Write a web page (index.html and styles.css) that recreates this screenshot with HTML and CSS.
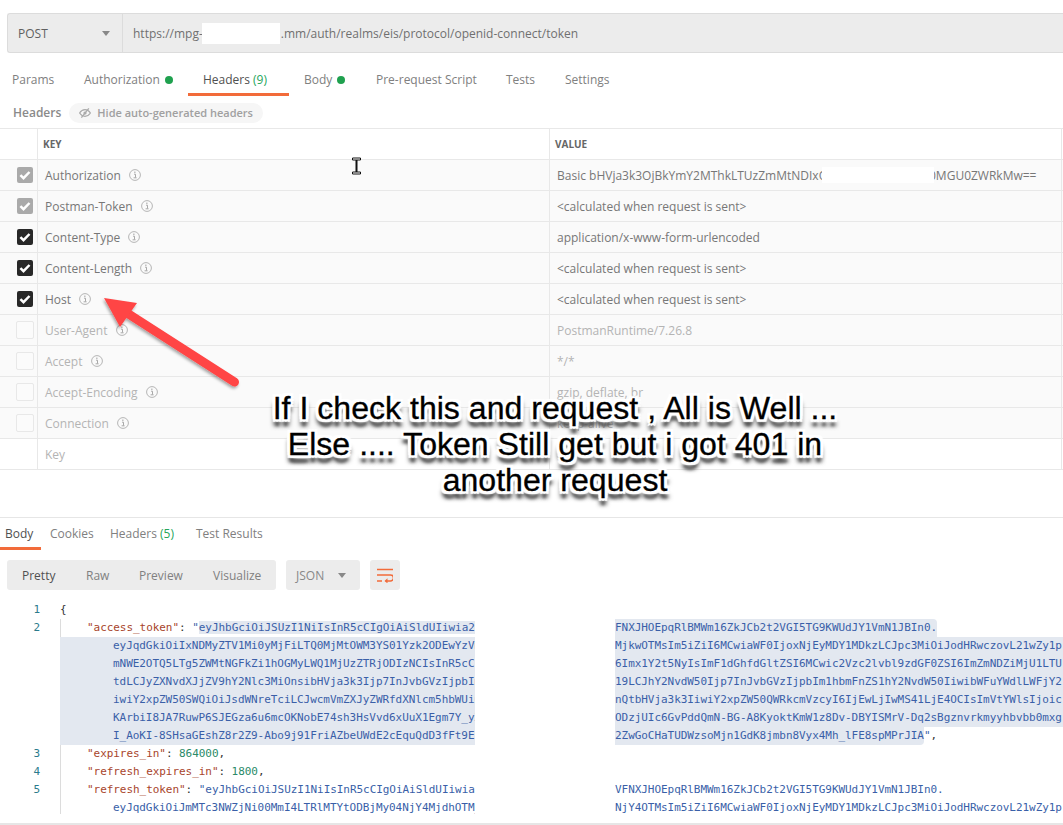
FILE: index.html
```html
<!DOCTYPE html>
<html lang="en">
<head>
<meta charset="utf-8">
<title>Postman request</title>
<link rel="stylesheet" href="styles.css">
</head>
<body>
<svg class="defs" width="0" height="0" aria-hidden="true">
  <symbol id="info" viewBox="0 0 12 12">
    <circle cx="6" cy="6" r="5.4" fill="none" stroke="#b5b5b5" stroke-width="1"/>
    <path d="M5 3.2h1.6M5 5.2h1.5v3.4M4.6 8.8h3" fill="none" stroke="#a8a8a8" stroke-width="1"/>
  </symbol>
  <symbol id="check" viewBox="0 0 16 16">
    <path d="M3.4 8.2l3.1 3 6-6.2" fill="none" stroke="#fff" stroke-width="2.5"/>
  </symbol>
</svg>
<div class="app">
  <div class="urlbar">
    <div class="method"><span>POST</span><i class="caret"></i></div>
    <div class="url"><span>https://mpg-</span><i class="redact-url"></i><span>.mm/auth/realms/eis/protocol/openid-connect/token</span></div>
  </div>

  <nav class="tabs req-tabs">
    <div class="tab t-params">Params</div>
    <div class="tab t-auth">Authorization <i class="dot"></i></div>
    <div class="tab t-head active">Headers <em>(9)</em></div>
    <div class="tab t-body">Body <i class="dot"></i></div>
    <div class="tab t-pre">Pre-request Script</div>
    <div class="tab t-tests">Tests</div>
    <div class="tab t-set">Settings</div>
  </nav>

  <div class="subhead">
    <strong>Headers</strong>
    <div class="pill">
      <svg width="12" height="10" viewBox="0 0 12 10"><path d="M.6 5C2 2.8 3.8 1.7 6 1.7S10 2.8 11.4 5C10 7.2 8.2 8.3 6 8.3S2 7.2.6 5z" fill="none" stroke="#aaa" stroke-width="1.2"/><circle cx="6" cy="5" r="1.6" fill="#aaa"/><path d="M9.8.4L2.4 9.6" stroke="#aaa" stroke-width="1.3"/></svg>
      <span>Hide auto-generated headers</span>
    </div>
  </div>

  <div class="table">
    <div class="row head"><div class="c0"></div><div class="c1">KEY</div><div class="c2">VALUE</div></div>
    <div class="row"><div class="c0"><span class="cb gray"><svg><use href="#check"/></svg></span></div><div class="c1">Authorization <svg class="info"><use href="#info"/></svg></div><div class="c2 auth"><span class="a-left">Basic bHVja3k3OjBkYmY2MThkLTUzZmMtNDIxOTUtYzk2</span><i class="a-gap"></i><span class="a-right">0MGU0ZWRkMw==</span></div></div>
    <div class="row"><div class="c0"><span class="cb gray"><svg><use href="#check"/></svg></span></div><div class="c1">Postman-Token <svg class="info"><use href="#info"/></svg></div><div class="c2">&lt;calculated when request is sent&gt;</div></div>
    <div class="row"><div class="c0"><span class="cb dark"><svg><use href="#check"/></svg></span></div><div class="c1">Content-Type <svg class="info"><use href="#info"/></svg></div><div class="c2">application/x-www-form-urlencoded</div></div>
    <div class="row"><div class="c0"><span class="cb dark"><svg><use href="#check"/></svg></span></div><div class="c1">Content-Length <svg class="info"><use href="#info"/></svg></div><div class="c2">&lt;calculated when request is sent&gt;</div></div>
    <div class="row"><div class="c0"><span class="cb dark"><svg><use href="#check"/></svg></span></div><div class="c1">Host <svg class="info"><use href="#info"/></svg></div><div class="c2">&lt;calculated when request is sent&gt;</div></div>
    <div class="row off"><div class="c0"><span class="cb empty"></span></div><div class="c1">User-Agent <svg class="info"><use href="#info"/></svg></div><div class="c2">PostmanRuntime/7.26.8</div></div>
    <div class="row off"><div class="c0"><span class="cb empty"></span></div><div class="c1">Accept <svg class="info"><use href="#info"/></svg></div><div class="c2">*/*</div></div>
    <div class="row off"><div class="c0"><span class="cb empty"></span></div><div class="c1">Accept-Encoding <svg class="info"><use href="#info"/></svg></div><div class="c2">gzip, deflate, br</div></div>
    <div class="row off"><div class="c0"><span class="cb empty"></span></div><div class="c1">Connection <svg class="info"><use href="#info"/></svg></div><div class="c2">keep-alive</div></div>
    <div class="row blank off"><div class="c0"></div><div class="c1">Key</div><div class="c2"></div></div>
  </div>

  <section class="response">
    <nav class="tabs res-tabs">
      <div class="tab r-body active">Body</div>
      <div class="tab r-cook">Cookies</div>
      <div class="tab r-head">Headers <em>(5)</em></div>
      <div class="tab r-test">Test Results</div>
    </nav>
    <div class="toolbar">
      <div class="seg"><span class="cur">Pretty</span><span>Raw</span><span>Preview</span><span>Visualize</span></div>
      <div class="lang"><span>JSON</span><i class="caret"></i></div>
      <div class="wrapbtn"><svg width="16" height="15" viewBox="0 0 16 15"><path d="M0 1.500h16M0 7h13.500a2.700 2.700 0 0 1 0 6H8.500M0 13h5" fill="none" stroke="#f26b3a" stroke-width="1.6"/><path d="M10.500 10.200L7.500 13l3 2.400z" fill="#f26b3a"/></svg></div>
    </div>
    <div class="code">
      <div class="ln"><span class="n">1</span><span class="l"><b>{</b></span></div>
      <div class="ln"><span class="n">2</span><span class="l g i1"><span class="k">"access_token"</span><b>: </b><span class="s">"</span><span class="s sel">eyJhbGciOiJSUzI1NiIsInR5cCIgOiAiSldUIiwia2</span></span><span class="r"><span class="s sel top">FNXJHOEpqRlBMWm16ZkJCb2t2VGI5TG9KWUdJY1VmN1JBIn0.</span></span></div>
      <div class="ln"><span class="n"></span><span class="l i2 sel s">eyJqdGkiOiIxNDMyZTV1Mi0yMjFiLTQ0MjMtOWM3YS01Yzk2ODEwYzVm</span><span class="r full s">MjkwOTMsIm5iZiI6MCwiaWF0IjoxNjEyMDY1MDkzLCJpc3MiOiJodHRwczovL21wZy1p</span></div>
      <div class="ln"><span class="n"></span><span class="l i2 sel s">mNWE2OTQ5LTg5ZWMtNGFkZi1hOGMyLWQ1MjUzZTRjODIzNCIsInR5cCI</span><span class="r full s">6Imx1Y2t5NyIsImF1dGhfdGltZSI6MCwic2Vzc2lvbl9zdGF0ZSI6ImZmNDZiMjU1LTU</span></div>
      <div class="ln"><span class="n"></span><span class="l i2 sel s">tdLCJyZXNvdXJjZV9hY2Nlc3MiOnsibHVja3k3Ijp7InJvbGVzIjpbIm</span><span class="r full s">19LCJhY2NvdW50Ijp7InJvbGVzIjpbIm1hbmFnZS1hY2NvdW50IiwibWFuYWdlLWFjY2</span></div>
      <div class="ln"><span class="n"></span><span class="l i2 sel s">iwiY2xpZW50SWQiOiJsdWNreTciLCJwcmVmZXJyZWRfdXNlcm5hbWUiO</span><span class="r full s">nQtbHVja3k3IiwiY2xpZW50QWRkcmVzcyI6IjEwLjIwMS41LjE4OCIsImVtYWlsIjoic</span></div>
      <div class="ln"><span class="n"></span><span class="l i2 sel s">KArbiI8JA7RuwP6SJEGza6u6mcOKNobE74sh3HsVvd6xUuX1Egm7Y_yX</span><span class="r full s">ODzjUIc6GvPddQmN-BG-A8KyoktKmW1z8Dv-DBYISMrV-Dq2sBgznvrkmyyhbvbb0mxg</span></div>
      <div class="ln"><span class="n"></span><span class="l i2 sel s">I_AoKI-8SHsaGEshZ8r2Z9-Abo9j91FriAZbeUWdE2cEquQdD3fFt9Ek</span><span class="r"><span class="s sel bot">2ZwGoCHaTUDWzsoMjn1GdK8jmbn8Vyx4Mh_lFE8spMPrJIA</span><span class="s">"</span><b>,</b></span></div>
      <div class="ln"><span class="n">3</span><span class="l g i1"><span class="k">"expires_in"</span><b>: </b><span class="v">864000</span><b>,</b></span></div>
      <div class="ln"><span class="n">4</span><span class="l g i1"><span class="k">"refresh_expires_in"</span><b>: </b><span class="v">1800</span><b>,</b></span></div>
      <div class="ln"><span class="n">5</span><span class="l g i1"><span class="k">"refresh_token"</span><b>: </b><span class="s">"eyJhbGciOiJSUzI1NiIsInR5cCIgOiAiSldUIiwia</span></span><span class="r s">VFNXJHOEpqRlBMWm16ZkJCb2t2VGI5TG9KWUdJY1VmN1JBIn0.</span></div>
      <div class="ln last"><span class="n"></span><span class="l g i2 s">eyJqdGkiOiJmMTc3NWZjNi00MmI4LTRlMTYtODBjMy04NjY4MjdhOTM_</span><span class="r full s">NjY4OTMsIm5iZiI6MCwiaWF0IjoxNjEyMDY1MDkzLCJpc3MiOiJodHRwczovL21wZy1p</span></div>
    </div>
  </section>

  <svg class="ibeam" width="11" height="18" viewBox="0 0 11 18"><path d="M5.500 2v14" stroke="#111" stroke-width="2"/><path d="M1.500 1h8v2h-8zM1.500 15h8v2h-8z" fill="#fff" stroke="#111" stroke-width="1"/></svg>

  <svg class="arrow" width="150" height="100" viewBox="100 295 150 100">
    <defs><filter id="ds" x="-20%" y="-20%" width="140%" height="140%"><feDropShadow dx="-1" dy="2" stdDeviation="1.5" flood-color="#000" flood-opacity=".35"/></filter></defs>
    <g filter="url(#ds)"><path d="M234.500 382L127 313" stroke="#ff4444" stroke-width="9" stroke-linecap="round"/><path d="M104 298l33 5-17 24z" fill="#ff4444"/></g>
  </svg>

  <div class="note">If I check this and request , All is Well ...<br>Else .... Token Still get but i got 401 in<br>another request</div>
</div>
</body>
</html>
```
FILE: styles.css
```css
* { box-sizing: border-box; }
html, body { margin: 0; padding: 0; background: #fff; }
body { width: 1063px; height: 825px; overflow: hidden; font: 12px "Open Sans", sans-serif; color: #6f6f6f; }
.defs { position: absolute; }
.app { position: relative; width: 1063px; height: 825px; padding-top: 13px; overflow: hidden; display: flex; flex-direction: column; }
i, em { font-style: normal; }

.urlbar { margin-left: 7px; height: 40px; display: flex; background: #ececec; border: 1px solid #dcdcdc; border-right: 0; border-radius: 3px 0 0 3px; flex: none; }
.method { width: 115px; display: flex; align-items: center; justify-content: space-between; padding: 0 12px 0 10px; border-right: 1px solid #dcdcdc; color: #606060; }
.caret { display: block; width: 0; height: 0; border: 4px solid transparent; border-top: 5px solid #888; border-bottom: 0; }
.url { display: flex; align-items: center; padding-left: 10px; color: #707070; white-space: pre; }
.redact-url { width: 78px; height: 21px; background: #fff; margin: 0 1px 0 -1px; }

.tabs { display: grid; flex: none; }
.tab { display: flex; align-items: center; white-space: pre; color: #808080; border-bottom: 3px solid transparent; }
.tab em { color: #26a65b; }
.tab.active { color: #505050; border-bottom-color: #f26b3a; }
.dot { display: block; width: 8px; height: 8px; border-radius: 50%; background: #1fa14f; margin-left: 2px; }
.req-tabs { height: 43px; padding: 13px 0 0 12px; grid-template-columns: 72px 104px 101px 87px 130px 59px 1fr; }
.t-head, .t-body { padding-left: 15px; }

.subhead { height: 32px; flex: none; display: flex; align-items: center; padding: 1px 0 0 13px; gap: 8px; }
.subhead strong { font-weight: 600; color: #8a8a8a; }
.pill { height: 20px; width: 194px; display: flex; align-items: center; gap: 6px; padding-left: 10px; background: #f6f6f6; border-radius: 10px; color: #a0a0a0; font-weight: 600; font-size: 11px; white-space: pre; }

.table { flex: none; border-top: 1px solid #e8e8e8; }
.row { display: grid; grid-template-columns: 38px 512px 512px; height: 31px; background: #fafafa; border-bottom: 1px solid #e8e8e8; color: #777; }
.row > div { display: flex; align-items: center; }
.c0 { padding-left: 17px; border-right: 1px solid #e8e8e8; }
.c1 { padding-left: 7px; gap: 5px; white-space: pre; border-right: 1px solid #e8e8e8; }
.c2 { padding-left: 7px; border-right: 1px solid #e8e8e8; white-space: pre; }
.row.head { background: #fff; font-size: 10px; font-weight: 700; color: #666; }
.row.head .c1, .row.head .c2 { padding-left: 5px; }
.row.off { color: #b4b4b4; }
.row.blank { background: #fff; }
.info { width: 12px; height: 12px; flex: none; }
.cb { display: block; width: 16px; height: 16px; border-radius: 2px; }
.cb svg { display: block; width: 16px; height: 16px; }
.cb.gray { background: #aaa; }
.cb.dark { background: #282828; }
.cb.empty { width: 18px; height: 18px; margin-left: -1px; background: #fbfbfb; border: 1px solid #e8e8e8; }
.a-left { width: 265px; overflow: hidden; }
.a-gap { width: 112px; height: 16px; background: #fff; position: relative; z-index: 1; flex: none; }
.a-right { margin-left: -5px; }

.response { margin-top: 47px; border-top: 1px solid #e6e6e6; flex: 1; display: flex; flex-direction: column; }
.res-tabs { height: 32px; padding-top: 2px; grid-template-columns: 41px 60px 95px 1fr; }
.r-body { padding-left: 5px; }
.r-cook { padding-left: 9px; }
.r-head { padding-left: 9px; }
.toolbar { display: flex; margin: 10px 0 0 7px; height: 30px; gap: 10px; flex: none; }
.seg { width: 269px; background: #ececec; border-radius: 3px; display: grid; grid-template-columns: 64px 53px 74px 1fr; align-items: center; padding-left: 15px; color: #808080; }
.seg .cur { color: #505050; }
.lang { width: 74px; background: #ececec; border-radius: 3px; display: flex; align-items: center; justify-content: space-between; padding: 0 14px 0 10px; color: #888; }
.wrapbtn { width: 30px; background: #ececec; border-radius: 3px; display: flex; align-items: center; justify-content: center; }

.code { margin-top: 11px; height: 224px; font: 11px/18px "DejaVu Sans Mono", monospace; letter-spacing: -.05px; border-bottom: 2px solid #e6e6e6; overflow: hidden; }
.ln { display: flex; height: 18px; white-space: pre; }
.ln.last { height: 15px; overflow: hidden; }
.code b { font-weight: 400; color: #333; }
.n { width: 40px; text-align: right; color: #2a7b8c; margin-right: 20px; flex: none; }
.l { width: 415px; overflow: hidden; flex: none; }
.g { box-shadow: inset 1px 0 0 #dcdcdc; }
.i1 { padding-left: 27px; }
.i2 { padding-left: 53px; }
.r { margin-left: 140px; flex: none; }
.k { color: #a8452c; }
.s { color: #3a5fa8; }
.v { color: #2a8a68; }
.sel { background: #e3e8f0; }
.top { border-radius: 0 4px 0 0; display: inline-block; }
.bot { border-radius: 0 0 4px 0; display: inline-block; }
.full { background: #e3e8f0; width: 448px; overflow: hidden; }
.ln.last .full { background: none; }

.ibeam { position: absolute; left: 351px; top: 157px; }
.arrow { position: absolute; left: 100px; top: 295px; }
.note { position: absolute; left: 222px; top: 390px; width: 666px; text-align: center; font: 32.1px/36px "Liberation Sans", sans-serif; color: #000; -webkit-text-stroke: .3px #000;
  text-shadow: 2px 0 0 #fff, -2px 0 0 #fff, 0 2px 0 #fff, 0 -2px 0 #fff, 2px 2px 0 #fff, -2px -2px 0 #fff, 2px -2px 0 #fff, -2px 2px 0 #fff, 3px 0 1px #fff, -3px 0 1px #fff, 0 3px 1px #fff, 0 -3px 1px #fff, 3px 3px 1px #fff, -3px 3px 1px #fff, 3px -3px 1px #fff, -3px -3px 1px #fff, 2px 7px 4px #555, -2px 7px 4px #555, 0 7px 3px #555; }
```
